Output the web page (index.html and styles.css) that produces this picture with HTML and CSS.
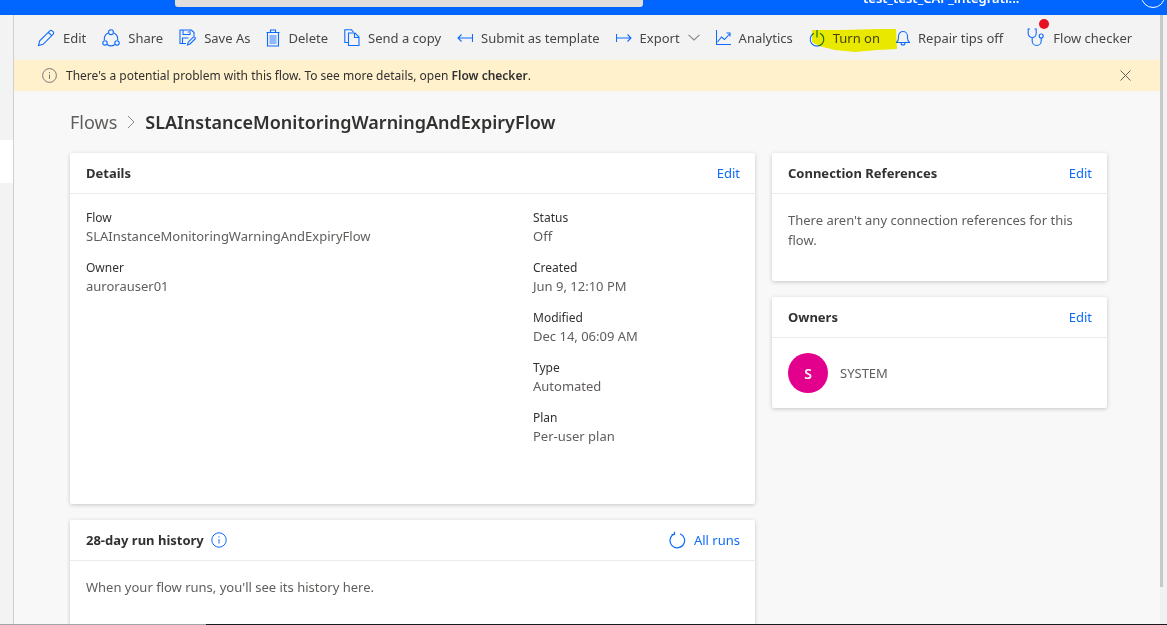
FILE: index.html
```html
<!DOCTYPE html>
<html lang="en">

<head>
    <meta charset="UTF-8">
    <meta name="viewport" content="width=device-width, initial-scale=1.0">
    <title>SLAInstanceMonitoringWarningAndExpiryFlow</title>
    <link rel="stylesheet" href="styles.css">
</head>

<body>
    <header class="topbar">
        <div class="search"></div>
        <div class="env">test_test_CAP_integrati...</div>
        <div class="avatar-ring"></div>
    </header>
    <div class="shell">
        <div class="rail"><span class="rail-tab"></span></div>
        <div class="page">
            <nav class="commands">
                <a class="cmd cmd-edit" href="javascript:;">
                    <svg width="18" height="18" viewBox="0 0 18 18"><path d="M1.5 16.5l1.2-4.6L12.8 1.8a1.6 1.6 0 0 1 2.3 0l1.1 1.1a1.6 1.6 0 0 1 0 2.3L6.100 15.300zM11.300 3.300l3.400 3.400" /></svg>
                    Edit
                </a>
                <a class="cmd cmd-share" href="javascript:;">
                    <svg width="18" height="18" viewBox="0 0 18 18"><path d="M6 3.900A7 7 0 0 0 2.400 11M15.600 11A7 7 0 0 0 12 3.900M5 15.500a7 7 0 0 0 8 0" /><circle cx="9" cy="3.200" r="2.400" /><circle cx="3" cy="13.900" r="2.200" /><circle cx="15" cy="13.900" r="2.200" /></svg>
                    Share
                </a>
                <a class="cmd cmd-save" href="javascript:;">
                    <svg width="17" height="17" viewBox="0 0 17 17"><path d="M7 14.500H1V1h11.500L15 3.500V7M4 1v4.500h7V1M3.500 14V9h6" /><path class="fill" d="M8.500 1h2v3h-2z" /><path d="M8.500 15.800l.7-2.600 5-5a1 1 0 0 1 1.500 0l.3.300a1 1 0 0 1 0 1.500l-5 5z" /></svg>
                    Save As
                </a>
                <a class="cmd cmd-delete" href="javascript:;">
                    <svg width="14" height="18" viewBox="0 0 14 18"><path d="M1.500 3.500h11V17h-11zM.5 3.500h13M4.500 3.500V1h5v2.500" /><path class="fill" d="M3.500 6h7v9h-7z" /></svg>
                    Delete
                </a>
                <a class="cmd cmd-copy" href="javascript:;">
                    <svg width="16" height="17" viewBox="0 0 16 17"><path d="M4.500 13.500H.8V.8h6.700l2 2.200M4.500 4h6.500l4 4v8.500H4.500zM10.500 4v4.500H15" /></svg>
                    Send a copy
                </a>
                <a class="cmd cmd-submit" href="javascript:;">
                    <svg width="16" height="10" viewBox="0 0 16 10"><path d="M15.500 5H1M4.500 1.500L1 5l3.500 3.500M15.500 1v8" /></svg>
                    Submit as template
                </a>
                <a class="cmd cmd-export" href="javascript:;">
                    <svg width="16" height="10" viewBox="0 0 16 10"><path d="M.5 5H15M11.500 1.500L15 5l-3.500 3.500M.5 1v8" /></svg>
                    Export
                    <svg class="chevron" width="12" height="7" viewBox="0 0 12 7"><path d="M.5.8L6 6l5.500-5.200" /></svg>
                </a>
                <a class="cmd cmd-analytics" href="javascript:;">
                    <svg width="15" height="15" viewBox="0 0 15 15"><path d="M.5 0v14.500H15M1.500 12l4-5 3 2.500 5.500-6M10.500 3H14v3.500" /></svg>
                    Analytics
                </a>
                <a class="cmd cmd-power" href="javascript:;">
                    <svg width="16" height="18" viewBox="0 0 16 18"><path d="M5 4.200a6.800 6.800 0 1 0 6 0M8 1v7.500" /></svg>
                    Turn on
                </a>
                <a class="cmd cmd-bell" href="javascript:;">
                    <svg width="14" height="16" viewBox="0 0 14 16"><path d="M.5 12.500c1.500-1 2-2 2-4.500V6a4.500 4.500 0 0 1 9 0v2c0 2.500.5 3.500 2 4.500zM5 12.500v.5a2 2 0 0 0 4 0v-.5" /></svg>
                    Repair tips off
                </a>
                <a class="cmd cmd-checker" href="javascript:;">
                    <svg width="18" height="19" viewBox="0 0 18 19"><path d="M3 1H1.200v4.500a4 4 0 0 0 8 0V1H7.500M5.200 9.500V13a4.500 4.500 0 0 0 9 0V10" /><circle cx="14.200" cy="8" r="2" /></svg>
                    Flow checker
                    <span class="dot"></span>
                </a>
            </nav>
            <div class="notice">
                <svg class="notice-icon" width="15" height="15" viewBox="0 0 15 15"><circle cx="7.500" cy="7.500" r="6.900" /><path d="M7.500 6.500v4.500M7.500 4v1.200" /></svg>
                <span class="notice-text">There's a potential problem with this flow. To see more details, open <b>Flow checker</b>.</span>
                <svg class="notice-close" width="11" height="11" viewBox="0 0 11 11"><path d="M.5.500l10 10M10.500.500l-10 10" /></svg>
            </div>
            <main class="content">
                <div class="crumbs">
                    <span class="crumb">Flows</span>
                    <svg width="8" height="14" viewBox="0 0 8 14"><path d="M1 1l6 6-6 6" /></svg>
                    <span class="crumb-now">SLAInstanceMonitoringWarningAndExpiryFlow</span>
                </div>
                <div class="columns">
                    <div class="col">
                        <section class="card card-details">
                            <div class="card-head">
                                <h2>Details</h2>
                                <a href="javascript:;">Edit</a>
                            </div>
                            <div class="details">
                                <div class="details-col">
                                    <div class="field"><label>Flow</label><p>SLAInstanceMonitoringWarningAndExpiryFlow</p></div>
                                    <div class="field"><label>Owner</label><p>aurorauser01</p></div>
                                </div>
                                <div class="details-col">
                                    <div class="field"><label>Status</label><p>Off</p></div>
                                    <div class="field"><label>Created</label><p>Jun 9, 12:10 PM</p></div>
                                    <div class="field"><label>Modified</label><p>Dec 14, 06:09 AM</p></div>
                                    <div class="field"><label>Type</label><p>Automated</p></div>
                                    <div class="field"><label>Plan</label><p>Per-user plan</p></div>
                                </div>
                            </div>
                        </section>
                        <section class="card card-history">
                            <div class="card-head">
                                <h2>28-day run history
                                    <svg width="16" height="16" viewBox="0 0 16 16"><circle cx="8" cy="8" r="7.200" /><path d="M8 7v4.500M8 4.300v1.200" /></svg>
                                </h2>
                                <a class="all-runs" href="javascript:;">
                                    <svg width="17" height="18" viewBox="0 0 17 18"><path d="M11 2.700a7.300 7.300 0 1 1-6 .3M5.500.8V3.500H2.500" /></svg>
                                    All runs
                                </a>
                            </div>
                            <div class="card-text">When your flow runs, you'll see its history here.</div>
                        </section>
                    </div>
                    <div class="col">
                        <section class="card card-refs">
                            <div class="card-head">
                                <h2>Connection References</h2>
                                <a href="javascript:;">Edit</a>
                            </div>
                            <div class="card-text">There aren't any connection references for this flow.</div>
                        </section>
                        <section class="card">
                            <div class="card-head">
                                <h2>Owners</h2>
                                <a href="javascript:;">Edit</a>
                            </div>
                            <div class="owner">
                                <span class="persona">S</span>
                                SYSTEM
                            </div>
                        </section>
                    </div>
                </div>
            </main>
        </div>
        <div class="scrollbar"><span></span></div>
    </div>
    <!-- marker over the Turn on button -->
    <svg class="marker" width="90" height="26" viewBox="0 0 90 26"><path d="M2 3h28l40-1 16 0 1 20-20 1-22 2-20-2-16-4-7-4z" /></svg>
    <div class="taskline"></div>
</body>

</html>
```

FILE: styles.css
```css
* {
    margin: 0;
    padding: 0;
    box-sizing: border-box;
}

html,
body {
    height: 625px;
    overflow: hidden;
}

body {
    position: relative;
    display: flex;
    flex-direction: column;
    background-color: #f8f8f8;
    color: #323130;
    font-family: "Noto Sans", "Open Sans", sans-serif;
    font-size: 13px;
}

a {
    text-decoration: none;
    color: #0f6cff;
}

/* 顶部蓝条 */
.topbar {
    position: relative;
    flex: none;
    height: 15px;
    background-color: #0066ff;
    overflow: hidden;
}

.search {
    width: 468px;
    height: 7px;
    margin-left: 175px;
    background-color: #e1dfdd;
    border-radius: 0 0 3px 3px;
}

.env {
    position: absolute;
    top: -10px;
    left: 863px;
    color: #fff;
    font-size: 13px;
    font-weight: 600;
    line-height: 16px;
}

.avatar-ring {
    position: absolute;
    top: -16px;
    left: 1141px;
    width: 24px;
    height: 24px;
    border: 1px solid #fff;
    border-radius: 50%;
}

.shell {
    flex: 1;
    display: flex;
    min-height: 0;
}

.rail {
    flex: none;
    width: 14px;
    padding-top: 125px;
    background-color: #f3f3f3;
    border-right: 1px solid #d2d0ce;
}

.rail-tab {
    display: block;
    height: 43px;
    background-color: #fff;
}

.page {
    flex: 1;
    min-width: 0;
}

.scrollbar {
    flex: none;
    width: 7px;
    background-color: #f1f1f1;
}

.scrollbar span {
    display: block;
    width: 3px;
    height: 572px;
    background-color: #c8c8c8;
}

/* 命令栏 */
.commands {
    display: flex;
    align-items: center;
    height: 45px;
    padding-left: 23px;
    background-color: #f3f3f3;
}

.cmd {
    position: relative;
    display: flex;
    align-items: center;
    gap: 8px;
    margin-right: 16px;
    color: #484644;
    white-space: nowrap;
}

.cmd svg {
    flex: none;
    fill: none;
    stroke: #0f6cff;
    stroke-width: 1.100;
}

.cmd svg .fill {
    fill: #8db8ff;
    stroke: none;
}

.cmd .chevron {
    stroke: #8a8886;
}

.cmd-checker {
    margin-left: 8px;
}

.dot {
    position: absolute;
    top: -9px;
    left: 12px;
    width: 10px;
    height: 10px;
    background-color: #e81123;
    border-radius: 50%;
}

.marker {
    position: absolute;
    top: 27px;
    left: 810px;
    mix-blend-mode: multiply;
}

.marker path {
    fill: #f4f400;
}

/* 提示条 */
.notice {
    display: flex;
    align-items: center;
    height: 31px;
    padding: 0 29px 0 28px;
    background-color: #fff1cc;
    color: #323130;
    font-size: 12px;
}

.notice-icon {
    flex: none;
    margin-right: 9px;
    fill: none;
    stroke: #797775;
}

.notice-text {
    flex: 1;
}

.notice-text b {
    font-weight: 600;
}

.notice-close {
    flex: none;
    fill: none;
    stroke: #605e5c;
}

.content {
    padding: 0 0 0 56px;
}

.crumbs {
    display: flex;
    align-items: center;
    height: 62px;
    font-size: 18px;
}

.crumb {
    color: #605e5c;
}

.crumbs svg {
    margin: 0 10px;
    fill: none;
    stroke: #8a8886;
}

.crumb-now {
    color: #323130;
    font-weight: 600;
}

.columns {
    display: flex;
    align-items: flex-start;
    gap: 17px;
}

.col {
    display: flex;
    flex-direction: column;
    gap: 16px;
}

.col:first-child {
    width: 685px;
}

.col:last-child {
    width: 335px;
}

/* 卡片 */
.card {
    background-color: #fff;
    border-radius: 2px;
    box-shadow: 0 1px 4px rgba(0, 0, 0, .2);
}

.card-details {
    height: 351px;
}

.card-history {
    height: 140px;
}

.card-refs {
    height: 128px;
}

.card-head {
    display: flex;
    align-items: center;
    justify-content: space-between;
    height: 41px;
    padding: 0 15px 0 16px;
    border-bottom: 1px solid #edebe9;
}

.card-head h2 {
    display: flex;
    align-items: center;
    gap: 7px;
    font-size: 13px;
    font-weight: 700;
}

.card-head h2 svg {
    fill: none;
    stroke: #0f6cff;
}

.all-runs {
    display: flex;
    align-items: center;
    gap: 8px;
}

.all-runs svg {
    fill: none;
    stroke: #0f6cff;
    stroke-width: 1.200;
}

.details {
    display: flex;
    padding: 15px 16px 0;
}

.details-col {
    flex: none;
    width: 447px;
}

.details-col:last-child {
    width: auto;
}

.field {
    height: 50px;
}

.field label {
    display: block;
    font-size: 12px;
    line-height: 18px;
}

.field p {
    color: #605e5c;
    line-height: 18px;
}

.card-text {
    padding: 16px 16px 0;
    color: #605e5c;
    line-height: 20px;
}

.owner {
    display: flex;
    align-items: center;
    gap: 12px;
    height: 70px;
    padding: 0 16px;
    color: #605e5c;
}

.persona {
    display: flex;
    align-items: center;
    justify-content: center;
    width: 40px;
    height: 40px;
    background-color: #e3008c;
    border-radius: 50%;
    color: #fff;
    font-size: 14px;
    font-weight: 600;
}

.taskline {
    position: absolute;
    right: 0;
    bottom: 0;
    left: 0;
    height: 1px;
    background: linear-gradient(to right, #a6a6a6 206px, #1a1a1a 206px);
}
```
